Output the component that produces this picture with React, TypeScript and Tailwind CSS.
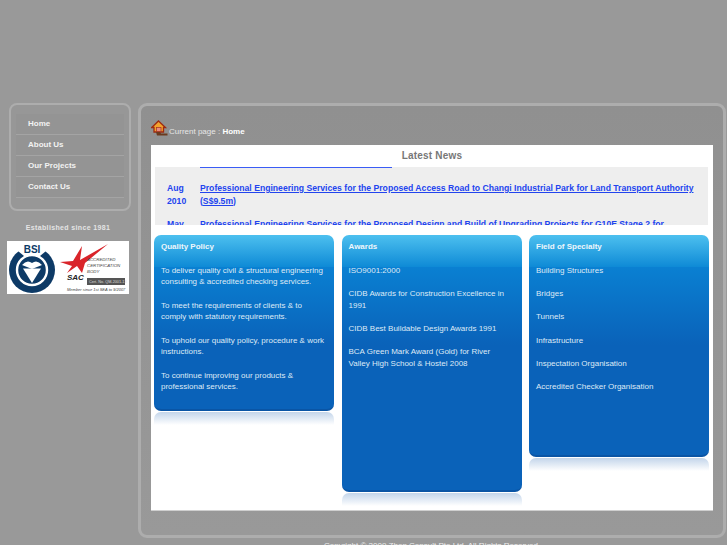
const font = "font-['Liberation_Sans',Arial,sans-serif]";

const navItems = ["Home", "About Us", "Our Projects", "Contact Us"];

const cards = [
  {
    title: "Quality Policy",
    height: "h-[176px]",
    lines: [
      "To deliver quality civil & structural engineering consulting & accredited checking services.",
      "To meet the requirements of clients & to comply with statutory requirements.",
      "To uphold our quality policy, procedure & work instructions.",
      "To continue improving our products & professional services.",
    ],
  },
  {
    title: "Awards",
    height: "h-[257px]",
    lines: [
      "ISO9001:2000",
      "CIDB Awards for Construction Excellence in 1991",
      "CIDB Best Buildable Design Awards 1991",
      "BCA Green Mark Award (Gold) for River Valley High School & Hostel 2008",
    ],
  },
  {
    title: "Field of Specialty",
    height: "h-[222px]",
    lines: [
      "Building Structures",
      "Bridges",
      "Tunnels",
      "Infrastructure",
      "Inspectation Organisation",
      "Accredited Checker Organisation",
    ],
  },
];

function HomeIcon() {
  return (
    <svg width="17" height="17" viewBox="0 0 17 17" className="shrink-0">
      <path d="M7.5 1 L14.5 7.5 L12.5 7.5 L12.5 12 L3 12 L3 7.5 L0.7 7.5 Z" fill="#f2a22e" stroke="#9c2a12" strokeWidth="1.3" />
      <rect x="5.5" y="7.5" width="4.5" height="4" fill="#e88a80" stroke="#a03020" strokeWidth="0.7" />
      <path d="M5 12 L9 12 L10 13.5 L16.5 13.5 L16.5 15.5 L6 15.5 Z" fill="#6b3a1e" />
    </svg>
  );
}

function Logos() {
  return (
    <div className="mt-2 h-[53px] w-[122px] bg-white">
      <svg width="122" height="53" viewBox="0 0 122 53">
        <circle cx="25" cy="29" r="23" fill="#0d3a66" />
        <path d="M11 10 L25 0 L39 10 L33 15 L17 15 Z" fill="#fff" />
        <circle cx="25" cy="29" r="15" fill="none" stroke="#fff" strokeWidth="2.4" />
        <path d="M15 24 Q20 18 25 22 Q30 18 35 24 L25 28 Z" fill="#fff" />
        <path d="M16 27.5 L34 27.5 L25 42 Z" fill="#fff" />
        <text x="25" y="12" textAnchor="middle" fontSize="10" fontWeight="700" fill="#0d3a66" fontFamily="Liberation Sans">BSI</text>
        <path d="M53 21 L66 20 L75 5 L73 19 L101 3 L78 22 L75 32 L70 25 L60 32 L65 25 Z" fill="#d9242a" />
        <text x="60" y="39" fontSize="8" fontWeight="700" fontStyle="italic" fill="#222" fontFamily="Liberation Sans">SAC</text>
        <text x="80" y="20" fontSize="4.4" fontStyle="italic" fill="#444" fontFamily="Liberation Sans">ACCREDITED</text>
        <text x="80" y="26" fontSize="4.4" fontStyle="italic" fill="#444" fontFamily="Liberation Sans">CERTIFICATION</text>
        <text x="80" y="32" fontSize="4.4" fontStyle="italic" fill="#444" fontFamily="Liberation Sans">BODY</text>
        <rect x="80" y="37" width="38" height="7" fill="#555" />
        <text x="82" y="42" fontSize="3.8" fill="#ddd" fontFamily="Liberation Sans">Cert. No. QM-2001-13</text>
        <text x="60" y="50" fontSize="4" fontStyle="italic" fill="#444" fontFamily="Liberation Sans">Member since 1st SEA to 9/2007</text>
      </svg>
    </div>
  );
}

function Sidebar() {
  return (
    <div className="w-[129px] shrink-0">
      <div className="ml-[2px] h-[108px] w-[122px] rounded-[8px] border-2 border-[#adadad] bg-[#979797] px-[5px] pt-[9px]">
        {navItems.map((item) => (
          <div
            key={item}
            className="flex h-[21px] items-center border-b border-[#a4a4a4] bg-[#949494] pl-[12px] text-[8px] font-bold text-[#f2f2f2]"
          >
            {item}
          </div>
        ))}
      </div>
      <div className="mt-[12px] w-[122px] text-center text-[7px] leading-[10px] font-bold tracking-[0.35px] text-[#e4e4e4]">
        Established since 1981
      </div>
      <Logos />
    </div>
  );
}

function NewsBox() {
  return (
    <div className="ml-[4px] h-[58px] w-[553px] overflow-hidden bg-[#eeeeee] text-[8.65px] leading-[12.5px] font-bold text-[#2244ee]">
      <div className="ml-[45px] h-px w-[192px] bg-[#3a5cf5]" />
      <div className="mt-[14px] flex">
        <div className="w-[45px] pl-[12px]">Aug 2010</div>
        <a className="w-[505px] underline">
          Professional Engineering Services for the Proposed Access Road to Changi Industrial Park for Land Transport Authority (S$9.5m)
        </a>
      </div>
      <div className="mt-[10.5px] flex">
        <div className="w-[45px] pl-[12px]">May</div>
        <a className="w-[505px] underline">
          Professional Engineering Services for the Proposed Design and Build of Upgrading Projects for G10E Stage 2 for
        </a>
      </div>
    </div>
  );
}

function Card({ title, height, lines }: { title: string; height: string; lines: string[] }) {
  return (
    <div className="w-[180px] shrink-0">
      <div
        className={`${height} rounded-[7px] border-b-2 border-[#0a55a5] bg-[linear-gradient(#4dc0ef_0px,#0e8ad6_32px,#0a80d2_32px,#0a62b9_110px,#0a62b9_100%)] pt-[6px] pr-[8.4px] pl-[7px] text-[8px] leading-[11.67px] text-[#dfeaf6]`}
      >
        <div className="mb-[12px] font-bold text-[#eef6fb]">{title}</div>
        {lines.map((line) => (
          <p key={line} className="mb-[11.67px]">
            {line}
          </p>
        ))}
      </div>
      <div className="mt-[1px] h-[13px] rounded-t-[7px] bg-gradient-to-b from-[#c3d5ea] to-white" />
    </div>
  );
}

export default function App() {
  return (
    <div className={`${font} h-[545px] w-[727px] overflow-hidden bg-[#999999] pt-[103px] pl-[7px]`}>
      <div className="flex gap-[2px]">
        <Sidebar />
        <div className="h-[435px] w-[588px] rounded-[9px] border-[3px] border-[#adadad] bg-gradient-to-b from-[#909090] to-[#999999] pt-[11px] pl-[10px]">
          <div className="flex h-[28px] items-end pb-[8px] text-[8px] leading-[10px] text-[#e6e6e6]">
            <HomeIcon />
            <span className="ml-px">
              Current page : <b className="text-white">Home</b>
            </span>
          </div>
          <div className="h-[366px] w-[562px] border-b border-[#cfcfcf] bg-white">
            <div className="h-[22px] pt-[5px] text-center text-[10px] leading-[12px] font-bold tracking-[0.2px] text-[#777777]">
              Latest News
            </div>
            <NewsBox />
            <div className="mt-[10px] flex gap-[7.5px] pl-[3px]">
              {cards.map((card) => (
                <Card key={card.title} {...card} />
              ))}
            </div>
          </div>
        </div>
      </div>
      <div className="mt-[3px] pl-[317px] text-[8px] leading-[10px] text-[#eeeeee]">
        Copyright © 2009 Zhen Consult Pte Ltd. All Rights Reserved.
      </div>
    </div>
  );
}
